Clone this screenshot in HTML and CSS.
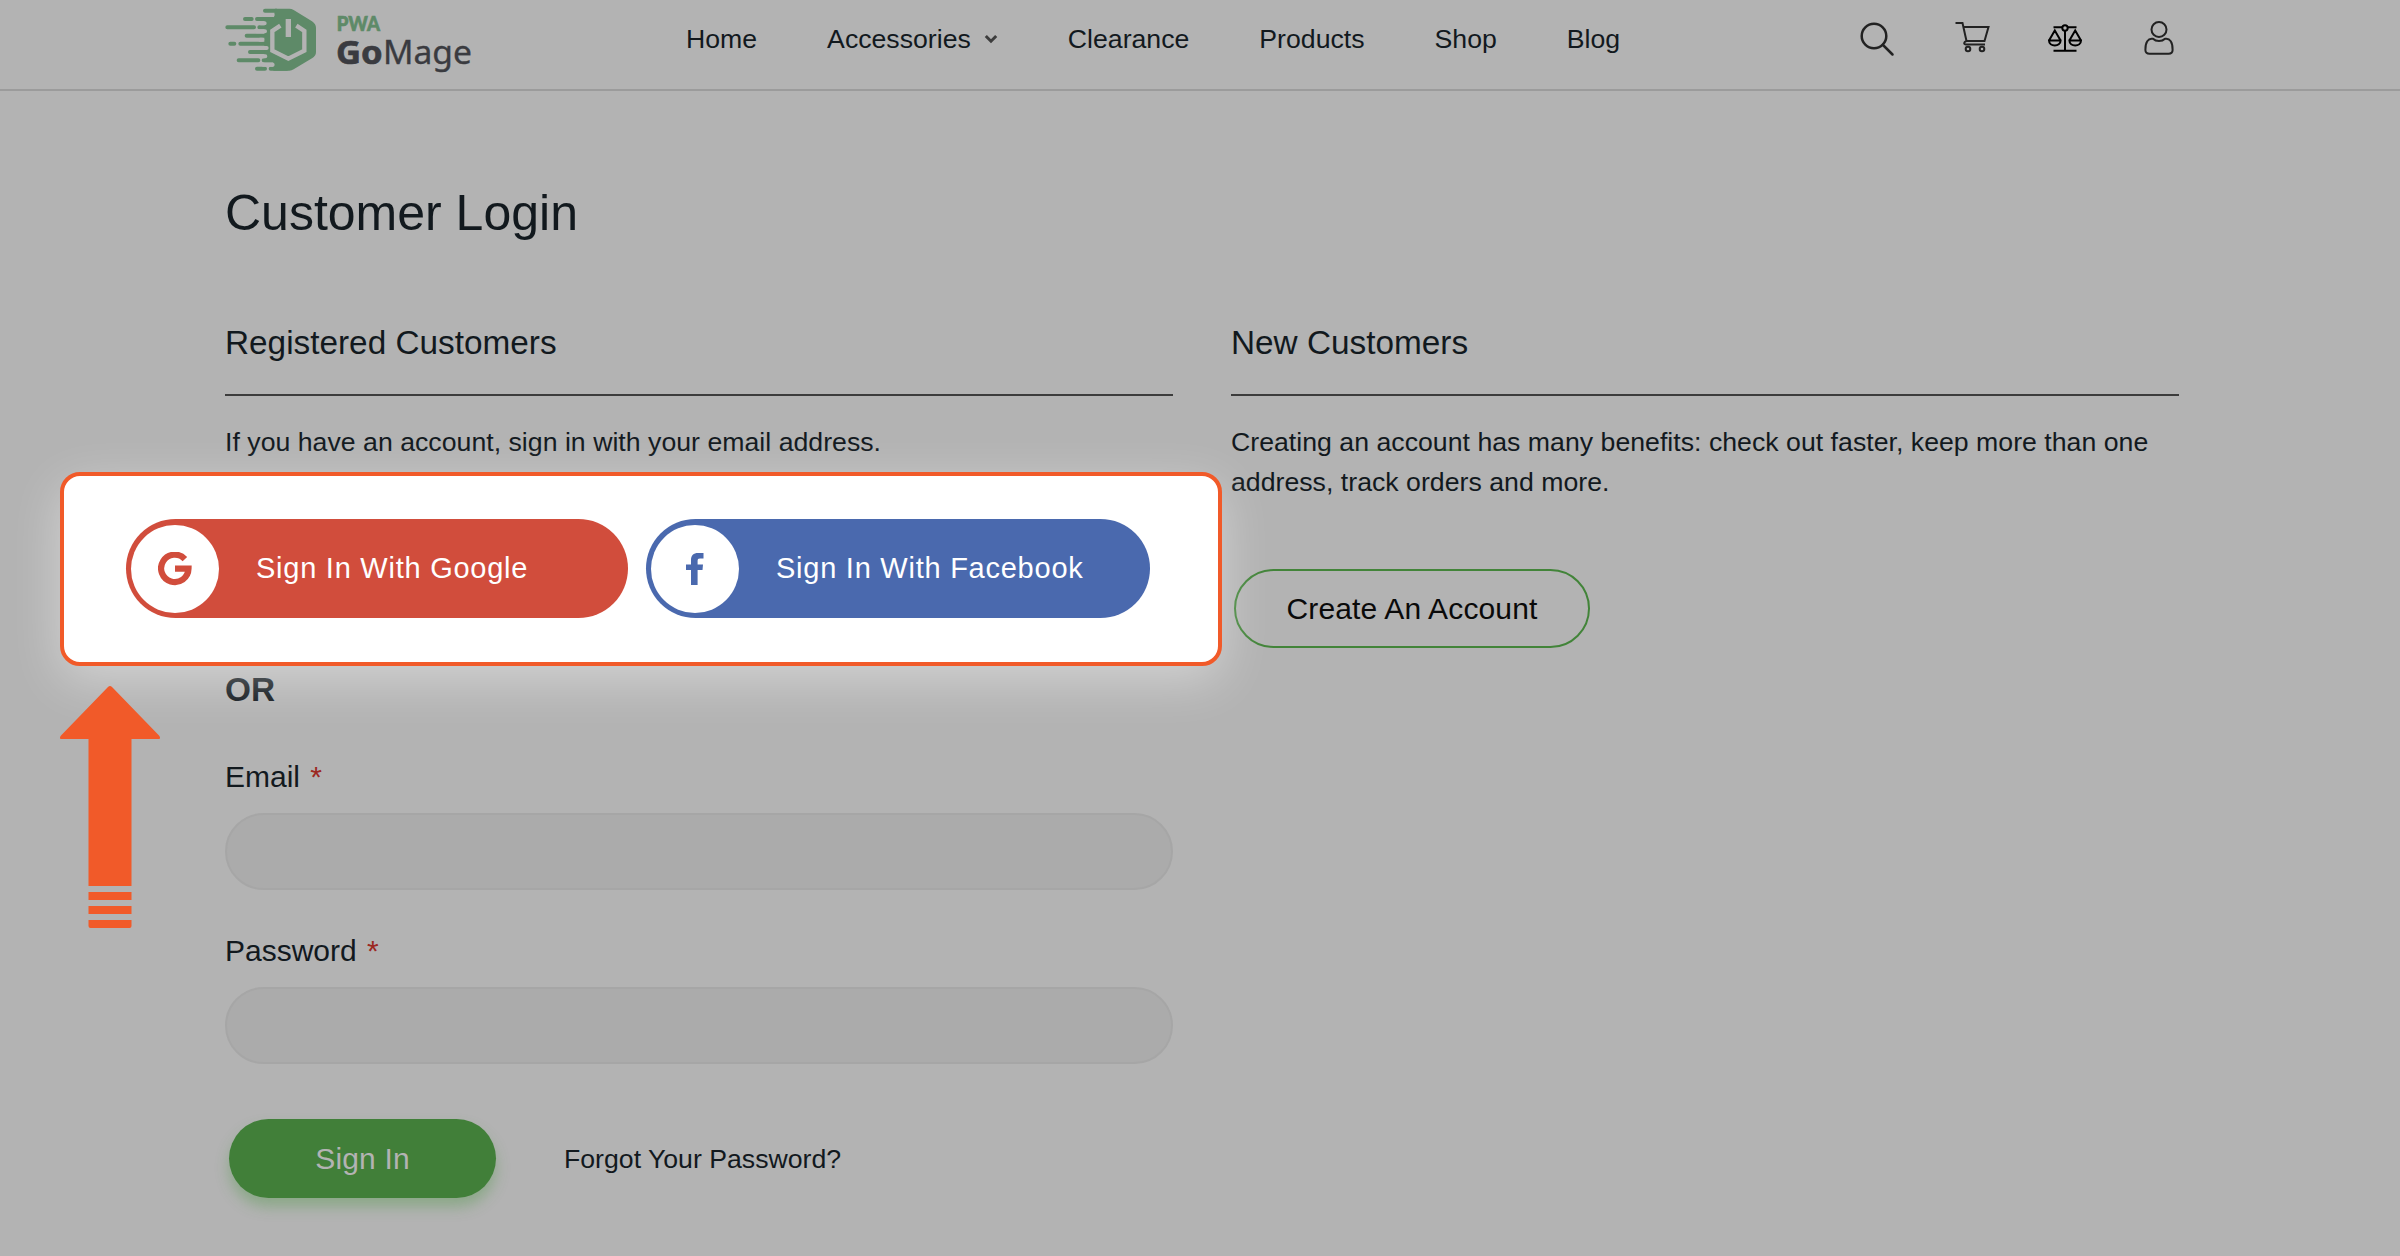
FILE: index.html
```html
<!DOCTYPE html>
<html lang="en">
<head>
  <meta charset="utf-8">
  <title>Customer Login</title>
  <link rel="stylesheet" href="styles.css">
</head>

<body>
  <header class="header">
    <a class="logo">
      <svg width="184" height="74" viewBox="45 0 552 222">
        <g fill="none" stroke="#5e8a68" stroke-width="12" stroke-linecap="round">
          <path d="M165 32H200M105 57H125M141 57H190M52 82H132M148 82H190M110 107H190M61 131H73M91 131H190M120 156H190M86 181H145M161 181H200M141 206H165M182 206H230"/>
        </g>
        <path fill="#5e8a68" d="M195 26H238Q245 26 251 30L306 64Q318 72 318 84V156Q318 168 306 175L251 208Q245 212 238 212H190V187H163V63H190Z"/>
        <g fill="none" stroke="#b3b3b3" stroke-width="12" stroke-linecap="round">
          <path d="M160 45H188M152 70H164M140 94H165M150 119H157M170 144H160M166 169H158M160 194H188"/>
        </g>
        <path fill="none" stroke="#b3b3b3" stroke-width="13" d="M211 77L187 93V152L235 176L283 152V93L259 77"/>
        <path fill="#b3b3b3" d="M227 57H243V111H227Z"/>
        <text class="logo-pwa" x="380" y="92" textLength="130" lengthAdjust="spacingAndGlyphs">PWA</text>
        <text class="logo-go" x="378" y="191" textLength="140" lengthAdjust="spacingAndGlyphs">Go</text>
        <text class="logo-mage" x="519" y="191" textLength="267" lengthAdjust="spacingAndGlyphs">Mage</text>
      </svg>
    </a>
    <nav class="nav">
      <a>Home</a>
      <a>Accessories
        <svg class="chevron" width="14" height="10" viewBox="0 0 14 10"><path d="M1.8 2L7 7.2L12.2 2"/></svg>
      </a>
      <a>Clearance</a>
      <a>Products</a>
      <a>Shop</a>
      <a>Blog</a>
    </nav>
    <div class="tools">
      <svg class="search" width="36" height="36" viewBox="0 0 36 36"><circle cx="15" cy="15" r="12.3"/><path d="M24 24L33.500 33.500"/></svg>
      <svg width="35" height="32" viewBox="0 0 35 32"><path d="M.5 2H7.500L11.500 20H29.500L33.500 6H8.500M11.500 20C8.500 21 8.500 23.500 11 23.500H30"/><circle cx="13" cy="28" r="2.300"/><circle cx="27" cy="28" r="2.300"/></svg>
      <svg class="scales" width="34" height="30" viewBox="0 0 34 30"><circle cx="17" cy="4" r="2.700"/><path d="M5.500 3.200H14.300M19.700 3.200H28.500M17 6.700V26.800M5.500 26.800H28.500M1 16.500L6.800 6.500L12.600 16.500M1 16.500C1 23.200 12.600 23.200 12.600 16.500ZM21.400 16.500L27.200 6.500L33 16.500M21.400 16.500C21.400 23.200 33 23.200 33 16.500Z"/></svg>
      <svg width="30" height="36" viewBox="0 0 30 36"><circle cx="15" cy="8.500" r="7.500"/><path d="M9 17.800C12 20.800 18 20.800 21 17.800C26 16.800 28.800 21.500 28.600 29C28.600 31.500 27.200 32.700 24.500 32.700H5.500C2.800 32.700 1.400 31.500 1.400 29C1.200 21.500 4 16.800 9 17.800Z"/></svg>
    </div>
  </header>

  <main class="content">
    <h1>Customer Login</h1>
    <div class="columns">
      <section>
        <h2>Registered Customers</h2>
        <p>If you have an account, sign in with your email address.</p>
        <div class="or">OR</div>
        <label for="email">Email <span class="required">*</span></label>
        <input id="email" type="email">
        <label for="password">Password <span class="required">*</span></label>
        <input id="password" type="password">
        <div class="actions">
          <button class="btn btn-primary">Sign In</button>
          <a class="forgot">Forgot Your Password?</a>
        </div>
      </section>
      <section>
        <h2>New Customers</h2>
        <p>Creating an account has many benefits: check out faster, keep more than one address, track orders and more.</p>
        <button class="btn btn-outline">Create An Account</button>
      </section>
    </div>
  </main>

  <!-- highlighted social login -->
  <div class="spotlight">
    <button class="social google">
      <span class="social-icon">
        <svg width="34" height="34" viewBox="0 0 34 34"><path fill="none" stroke="#d14d3c" stroke-width="6.200" d="M26.900 7.100A13.700 13.700 0 1 0 30.500 16.700H17"/></svg>
      </span>
      Sign In With Google
    </button>
    <button class="social facebook">
      <span class="social-icon">
        <svg width="18" height="32" viewBox="0 0 18 32"><path fill="#4a69ae" d="M17.500 0V5.500H14C12 5.500 11.600 6.300 11.600 8V11.500H17L16.500 17H11.600V32H5V17H0V11.500H5V7C5 2.500 7.500 0 12 0Z"/></svg>
      </span>
      Sign In With Facebook
    </button>
  </div>
  <svg class="arrow" width="100" height="243" viewBox="0 0 100 243">
    <path d="M48 1Q50-1 52 1L99 49.500Q101.500 53 98 53H71.500V200H28.500V53H2Q-1.500 53 1 49.500ZM28.500 206H71.500V214H28.500ZM28.500 220H71.500V228H28.500ZM28.500 234H71.500V240Q71.500 242 69.500 242H30.500Q28.500 242 28.500 240Z"/>
  </svg>
</body>

</html>
```
FILE: styles.css
```css
* {
  box-sizing: border-box;
}

body {
  margin: 0;
  height: 1256px;
  overflow: hidden;
  position: relative;
  background: #b3b3b3;
  color: #12191e;
  font-family: "Liberation Sans", Arial, sans-serif;
  font-size: 26.67px;
  line-height: 40px;
}

.header {
  display: flex;
  height: 91px;
  padding: 0 225px;
  border-bottom: 2px solid #9b9b9b;
}

.logo {
  width: 461px;
}

.logo svg {
  display: block;
  overflow: visible;
}

.logo-pwa {
  font: 900 62px Lato, sans-serif;
  fill: #5e8a68;
  stroke: #5e8a68;
  stroke-width: 2;
}

.logo-go {
  font: 700 98px "Noto Sans", sans-serif;
  fill: #3a3b40;
  stroke: #3a3b40;
  stroke-width: 2;
}

.logo-mage {
  font: 400 98px "Noto Sans", sans-serif;
  fill: #3a3b40;
  stroke: #3a3b40;
  stroke-width: 1;
}

.nav {
  display: flex;
  gap: 70px;
  padding-top: 19px;
}

.nav a {
  display: flex;
  align-items: center;
  height: 40px;
}

.chevron {
  margin-left: 13px;
  fill: none;
  stroke: #3d3d3d;
  stroke-width: 3;
}

.tools {
  display: flex;
  align-items: flex-start;
  gap: 60px;
  margin-left: auto;
  padding: 21px 1px 0 0;
}

.tools svg {
  fill: none;
  stroke: #222;
  stroke-width: 2;
}

.tools .search {
  stroke-width: 2.5;
  stroke-linecap: round;
}

.tools .scales {
  margin: 3px 2px 0 -2px;
  stroke: #000;
}

.content {
  padding: 92px 222px 0 225px;
}

h1 {
  margin: 0 0 80px;
  font-size: 50px;
  font-weight: 400;
  line-height: 60px;
}

.columns {
  display: grid;
  grid-template-columns: 948px 948px;
  gap: 58px;
}

h2 {
  margin: 0 0 26px;
  padding-bottom: 31px;
  border-bottom: 2px solid #3c3c3c;
  font-size: 33.33px;
  font-weight: 400;
}

p {
  margin: 0;
  letter-spacing: .02px;
}

.or {
  margin: 208px 0 47px;
  font-size: 33.33px;
  font-weight: 700;
}

label {
  display: block;
  font-size: 30px;
}

.required {
  margin-left: 2px;
  color: #9c2822;
  font-size: 30px;
}

input {
  display: block;
  width: 100%;
  height: 77px;
  margin: 16px 0 41px;
  border: 2px solid #a6a6a6;
  border-radius: 39px;
  background: #ababab;
}

.actions {
  display: flex;
  align-items: center;
  margin: 55px 0 0 4px;
}

.btn {
  height: 79px;
  border: 0;
  border-radius: 40px;
  font: 30px "Liberation Sans", Arial, sans-serif;
  letter-spacing: .15px;
}

.btn-primary {
  width: 267px;
  background: #417f39;
  box-shadow: 0 9px 14px rgba(65, 150, 57, .35);
  color: #b3b3b3;
}

.btn-outline {
  width: 356px;
  margin: 67px 0 0 3px;
  border: 2px solid #428439;
  background: none;
  color: #0a0a0a;
}

.forgot {
  margin-left: 68px;
}

.spotlight {
  position: absolute;
  left: 60px;
  top: 472px;
  display: flex;
  gap: 18px;
  width: 1162px;
  height: 194px;
  padding: 43px 0 0 62px;
  border: 4px solid #f15a29;
  border-radius: 20px;
  background: #fff;
  box-shadow: 0 14px 50px rgba(255, 255, 255, .42);
}

.social {
  display: flex;
  align-items: center;
  gap: 37px;
  width: 502px;
  height: 99px;
  padding: 0 0 0 5px;
  border: 0;
  border-radius: 50px;
  color: #fff;
  font: 29px "Liberation Sans", Arial, sans-serif;
  letter-spacing: .75px;
}

.google {
  background: #d14d3c;
}

.facebook {
  width: 504px;
  background: #4a69ae;
}

.social-icon {
  display: flex;
  align-items: center;
  justify-content: center;
  width: 88px;
  height: 88px;
  border-radius: 50%;
  background: #fff;
}

.arrow {
  position: absolute;
  left: 60px;
  top: 686px;
  fill: #f15a29;
}
```
